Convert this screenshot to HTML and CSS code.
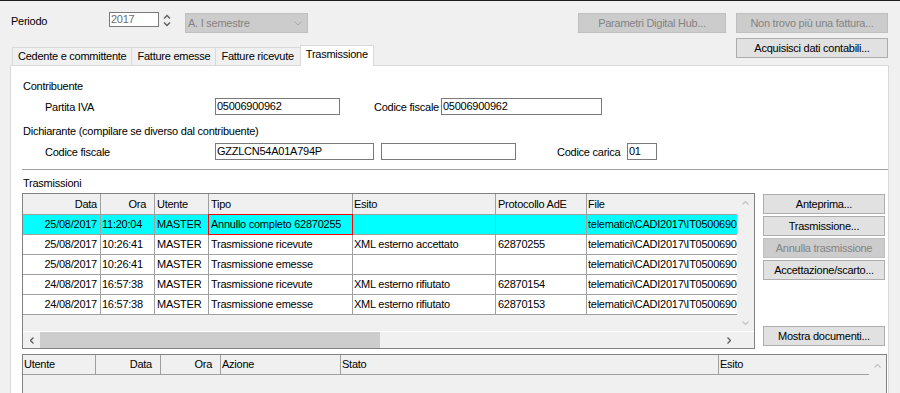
FILE: index.html
```html
<!DOCTYPE html>
<html lang="it">

<head>
  <meta charset="UTF-8" />
  <title>Trasmissione</title>
  <link rel="stylesheet" href="styles.css">
</head>

<body>
  <div id="window">
    <div id="topBar">
      <div class="top-left">
        <div class="periodo-row">
          <span class="periodo-label">Periodo</span>
          <div class="textbox year">2017</div>
          <svg class="spinner" width="8" height="13" viewBox="0 0 8 13">
            <polyline points="1,4.5 4,1.5 7,4.5" fill="none" stroke="#5f5f5f" stroke-width="1.4" />
            <polyline points="1,8.5 4,11.5 7,8.5" fill="none" stroke="#5f5f5f" stroke-width="1.4" />
          </svg>
          <div class="combo">
            <span>A. I semestre</span>
            <svg width="8" height="5" viewBox="0 0 8 5">
              <polyline points="0.5,0.5 4,4 7.5,0.5" fill="none" stroke="#a8a8a8" stroke-width="1" />
            </svg>
          </div>
        </div>
        <div class="tabs">
          <div class="tab">Cedente e committente</div>
          <div class="tab">Fatture emesse</div>
          <div class="tab">Fatture ricevute</div>
          <div class="tab selected">Trasmissione</div>
        </div>
      </div>
      <div class="top-actions">
        <div class="btn-row">
          <button class="btn disabled w148">Parametri Digital Hub...</button>
          <button class="btn disabled w152">Non trovo più una fattura...</button>
        </div>
        <button class="btn w152">Acquisisci dati contabili...</button>
      </div>
    </div>

    <div id="panel">
      <div class="section-label">Contribuente</div>
      <div class="field-row">
        <span class="field-label">Partita IVA</span>
        <div class="textbox piva">05006900962</div>
        <span class="inline-label cf-label">Codice fiscale</span>
        <div class="textbox cf-contr">05006900962</div>
      </div>

      <div class="section-label gap-top">Dichiarante (compilare se diverso dal contribuente)</div>
      <div class="field-row">
        <span class="field-label">Codice fiscale</span>
        <div class="textbox cf-dich">GZZLCN54A01A794P</div>
        <div class="textbox cf-extra"></div>
        <span class="inline-label carica-label">Codice carica</span>
        <div class="textbox carica">01</div>
      </div>

      <div class="divider"></div>

      <div class="section-label trasm-label">Trasmissioni</div>
      <div class="trasm-area">
        <div class="grid main-grid">
          <div class="grid-body">
            <div class="grid-rows">
              <div class="grid-row header">
                <div class="c c-data right">Data</div>
                <div class="c c-ora right">Ora</div>
                <div class="c c-utente">Utente</div>
                <div class="c c-tipo">Tipo</div>
                <div class="c c-esito">Esito</div>
                <div class="c c-prot">Protocollo AdE</div>
                <div class="c c-file">File</div>
              </div>
              <div class="grid-row sel">
                <div class="c c-data right">25/08/2017</div>
                <div class="c c-ora">11:20:04</div>
                <div class="c c-utente">MASTER</div>
                <div class="c c-tipo focus">Annullo completo 62870255</div>
                <div class="c c-esito"></div>
                <div class="c c-prot"></div>
                <div class="c c-file">telematici\CADI2017\IT05006900962_DF_00005.xml</div>
              </div>
              <div class="grid-row">
                <div class="c c-data right">25/08/2017</div>
                <div class="c c-ora">10:26:41</div>
                <div class="c c-utente">MASTER</div>
                <div class="c c-tipo">Trasmissione ricevute</div>
                <div class="c c-esito">XML esterno accettato</div>
                <div class="c c-prot">62870255</div>
                <div class="c c-file">telematici\CADI2017\IT05006900962_DF_00004.xml</div>
              </div>
              <div class="grid-row">
                <div class="c c-data right">25/08/2017</div>
                <div class="c c-ora">10:26:41</div>
                <div class="c c-utente">MASTER</div>
                <div class="c c-tipo">Trasmissione emesse</div>
                <div class="c c-esito"></div>
                <div class="c c-prot"></div>
                <div class="c c-file">telematici\CADI2017\IT05006900962_DF_00003.xml</div>
              </div>
              <div class="grid-row">
                <div class="c c-data right">24/08/2017</div>
                <div class="c c-ora">16:57:38</div>
                <div class="c c-utente">MASTER</div>
                <div class="c c-tipo">Trasmissione ricevute</div>
                <div class="c c-esito">XML esterno rifiutato</div>
                <div class="c c-prot">62870154</div>
                <div class="c c-file">telematici\CADI2017\IT05006900962_DF_00002.xml</div>
              </div>
              <div class="grid-row">
                <div class="c c-data right">24/08/2017</div>
                <div class="c c-ora">16:57:38</div>
                <div class="c c-utente">MASTER</div>
                <div class="c c-tipo">Trasmissione emesse</div>
                <div class="c c-esito">XML esterno rifiutato</div>
                <div class="c c-prot">62870153</div>
                <div class="c c-file">telematici\CADI2017\IT05006900962_DF_00001.xml</div>
              </div>
            </div>
            <div class="vscroll">
              <div class="arrow-box">
                <svg width="7" height="4" viewBox="0 0 7 4"><polyline points="0.5,3.5 3.5,0.5 6.5,3.5" fill="none" stroke="#c2c2c2" stroke-width="1.1" /></svg>
              </div>
              <div class="arrow-box">
                <svg width="7" height="4" viewBox="0 0 7 4"><polyline points="0.5,0.5 3.5,3.5 6.5,0.5" fill="none" stroke="#c2c2c2" stroke-width="1.1" /></svg>
              </div>
            </div>
          </div>
          <div class="hscroll">
            <div class="arrow-box">
              <svg width="4" height="7" viewBox="0 0 4 7"><polyline points="3.5,0.5 0.5,3.5 3.5,6.5" fill="none" stroke="#606060" stroke-width="1.3" /></svg>
            </div>
            <div class="track"><div class="thumb"></div></div>
            <div class="arrow-box">
              <svg width="4" height="7" viewBox="0 0 4 7"><polyline points="0.5,0.5 3.5,3.5 0.5,6.5" fill="none" stroke="#606060" stroke-width="1.3" /></svg>
            </div>
            <div class="corner"></div>
          </div>
        </div>

        <div class="side-buttons">
          <button class="btn">Anteprima...</button>
          <button class="btn">Trasmissione...</button>
          <button class="btn disabled">Annulla trasmissione</button>
          <button class="btn">Accettazione/scarto...</button>
          <button class="btn bottom">Mostra documenti...</button>
        </div>
      </div>

      <div class="grid log-grid">
        <div class="grid-rows">
          <div class="grid-row header">
            <div class="c l-utente">Utente</div>
            <div class="c l-data right">Data</div>
            <div class="c l-ora right">Ora</div>
            <div class="c l-azione">Azione</div>
            <div class="c l-stato">Stato</div>
            <div class="c l-esito">Esito</div>
          </div>
        </div>
        <div class="vscroll">
          <div class="arrow-box">
            <svg width="7" height="4" viewBox="0 0 7 4"><polyline points="0.5,3.5 3.5,0.5 6.5,3.5" fill="none" stroke="#c2c2c2" stroke-width="1.1" /></svg>
          </div>
        </div>
      </div>
    </div>
  </div>
</body>

</html>
```

FILE: styles.css
```css
* {
  margin: 0;
  padding: 0;
  box-sizing: border-box;
}

html,
body {
  background: #f0f0f0;
  font-family: 'Liberation Sans', Arial, sans-serif;
  font-size: 11px;
  letter-spacing: -0.25px;
  color: #000;
  overflow: hidden;
}

body {
  width: 900px;
  height: 393px;
}

#window {
  height: 393px;
  border-top: 1px solid #1e1e1e;
  display: flex;
  flex-direction: column;
}

/* top area: period + tabs on the left, buttons on the right */
#topBar {
  display: flex;
  justify-content: space-between;
  height: 64px;
  flex-shrink: 0;
}

.periodo-row {
  display: flex;
  align-items: flex-start;
  height: 32px;
  padding: 11px 0 0 11px;
}

.periodo-label {
  width: 98px;
  margin-top: 2px;
  line-height: 15px;
}

.textbox {
  height: 17px;
  background: #fff;
  border: 1px solid #7a7a7a;
  padding: 0 1px;
  line-height: 15px;
  white-space: nowrap;
  overflow: hidden;
}

.textbox.year {
  width: 50px;
  height: 15px;
  line-height: 13px;
  color: #6d6d6d;
}

.spinner {
  margin: 2px 0 0 4px;
}

.combo {
  margin: 1px 0 0 14px;
  width: 123px;
  height: 20px;
  background: #cccccc;
  border: 1px solid #bfbfbf;
  color: #838383;
  display: flex;
  align-items: center;
  justify-content: space-between;
  padding: 0 5px 0 2px;
}

.tabs {
  display: flex;
  align-items: flex-start;
  height: 20px;
  margin-top: 12px;
  padding-left: 12px;
}

.tab {
  height: 18px;
  margin-top: 2px;
  padding: 0 5px;
  line-height: 17px;
  background: #f0f0f0;
  border: 1px solid #d9d9d9;
  border-bottom: none;
  border-right: none;
  white-space: nowrap;
}

.tab:nth-child(3) {
  padding-right: 6px;
}

.tab.selected {
  position: relative;
  z-index: 1;
  height: 21px;
  margin-top: 0;
  background: #fff;
  border-right: 1px solid #d9d9d9;
  line-height: 17px;
}

.top-actions {
  display: flex;
  flex-direction: column;
  align-items: flex-end;
  gap: 5px;
  padding: 12px 12px 0 0;
}

.btn-row {
  display: flex;
  gap: 10px;
}

.btn {
  height: 20px;
  background: #e1e1e1;
  border: 1px solid #adadad;
  font-family: inherit;
  font-size: 11px;
  letter-spacing: -0.25px;
  color: #000;
  line-height: 13px;
  text-align: center;
  white-space: nowrap;
}

.btn.disabled {
  background: #cccccc;
  border-color: #bfbfbf;
  color: #838383;
}

.w148 {
  width: 148px;
}

.w152 {
  width: 152px;
}

/* tab page */
#panel {
  flex: 1;
  min-height: 0;
  margin-left: 10px;
  width: 879px;
  background: #fff;
  border: 1px solid #d9d9d9;
  border-bottom: none;
  padding: 10px 0 0 11px;
  display: flex;
  flex-direction: column;
}

.section-label {
  line-height: 20px;
  padding-left: 1px;
}

.section-label.gap-top {
  margin-top: 5px;
}

.field-row {
  display: flex;
  align-items: center;
  height: 20px;
  padding-left: 23px;
}

.field-label {
  width: 170px;
  padding-top: 1px;
}

.inline-label {
  white-space: nowrap;
  padding-top: 1px;
}

.piva {
  width: 125px;
}

.cf-label {
  width: 67px;
  margin-left: 34px;
}

.cf-contr {
  width: 161px;
}

.cf-dich {
  width: 159px;
}

.cf-extra {
  width: 135px;
  margin-left: 7px;
}

.carica-label {
  width: 70px;
  margin-left: 41px;
}

.carica {
  width: 30px;
}

.divider {
  height: 1px;
  background: #a0a0a0;
  margin-top: 8px;
  flex-shrink: 0;
}

.section-label.trasm-label {
  margin-top: 3px;
}

/* grids */
.trasm-area {
  display: flex;
  gap: 8px;
  height: 156px;
  flex-shrink: 0;
}

.grid {
  border: 1px solid #828282;
  background: #f0f0f0;
}

.main-grid {
  width: 733px;
  height: 156px;
  display: flex;
  flex-direction: column;
}

.grid-body {
  display: flex;
  height: 137px;
}

.grid-rows {
  width: 714px;
  overflow: hidden;
  background: #f0f0f0;
}

.grid-row {
  display: flex;
  height: 20px;
  background: #fff;
  border-bottom: 1px solid #a0a0a0;
}

.grid-row.header {
  height: 21px;
  background: #f0f0f0;
}

.grid-row.sel {
  background: #00ffff;
}

.c {
  height: 100%;
  border-right: 1px solid #a0a0a0;
  padding: 0 2px;
  line-height: 19px;
  white-space: nowrap;
  overflow: hidden;
  flex-shrink: 0;
}

.grid-row.header .c {
  line-height: 20px;
}

.c.right {
  text-align: right;
}

.c-data {
  width: 78px;
  padding-right: 3px;
}

.c-ora {
  width: 54px;
  padding-left: 1px;
}

.header .c-ora {
  padding-right: 8px;
}

.c-utente {
  width: 54px;
}

.c-tipo {
  width: 144px;
}

.c-esito {
  width: 143px;
  padding-left: 1px;
}

.c-prot {
  width: 91px;
}

.c-file {
  width: 150px;
  border-right: none;
  padding-left: 1px;
  overflow: hidden;
}

.c.focus {
  position: relative;
  overflow: visible;
}

.c.focus::after {
  content: '';
  position: absolute;
  top: -1px;
  left: -1px;
  right: -1px;
  bottom: -1px;
  border: 1px solid #ff0000;
}

.vscroll {
  width: 17px;
  background: #f0f0f0;
  display: flex;
  flex-direction: column;
  justify-content: space-between;
}

.arrow-box {
  width: 17px;
  height: 17px;
  display: flex;
  align-items: center;
  justify-content: center;
  flex-shrink: 0;
}

.hscroll {
  display: flex;
  height: 17px;
  background: #f0f0f0;
  border-top: 1px solid #fff;
}

.hscroll .arrow-box {
  height: 16px;
}

.track {
  flex: 1;
}

.thumb {
  width: 340px;
  height: 16px;
  background: #cdcdcd;
}

.corner {
  width: 17px;
  background: #f0f0f0;
}

.side-buttons {
  width: 122px;
  display: flex;
  flex-direction: column;
  gap: 2px;
  padding: 1px 0 3px;
}

.side-buttons .bottom {
  margin-top: auto;
}

.log-grid {
  flex: 1;
  width: 865px;
  margin-top: 5px;
  border-bottom: none;
  display: flex;
}

.log-grid .grid-rows {
  width: 846px;
}

.log-grid .grid-row.header {
  height: 20px;
}

.log-grid .grid-row.header .c {
  line-height: 19px;
}

.log-grid .vscroll {
  justify-content: flex-start;
  padding-top: 2px;
}

.l-utente {
  width: 73px;
  padding-left: 1px;
}

.l-data {
  width: 65px;
  padding-right: 8px;
}

.l-ora {
  width: 60px;
  padding-right: 8px;
}

.l-azione {
  width: 120px;
  padding-left: 1px;
}

.l-stato {
  width: 378px;
  padding-left: 1px;
}

.l-esito {
  width: 150px;
  border-right: none;
  padding-left: 1px;
}
```
